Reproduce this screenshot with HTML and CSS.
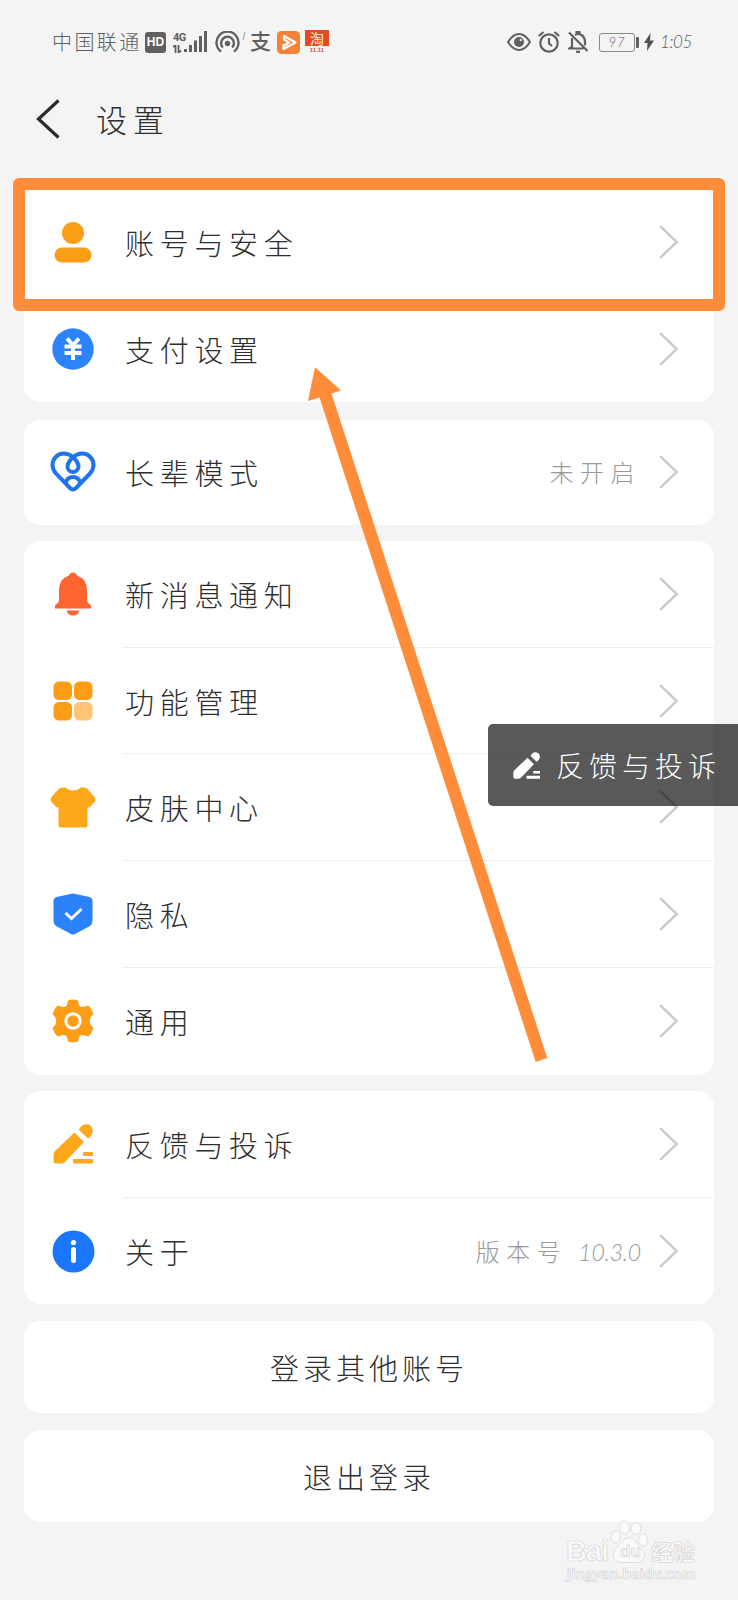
FILE: index.html
```html
<!DOCTYPE html>
<html lang="zh-CN">
<head>
<meta charset="utf-8">
<title>设置</title>
<link rel="stylesheet" href="styles.css">
</head>
<body>
<svg class="defs" width="0" height="0">
  <symbol id="chevron" viewBox="0 0 20 34"><path d="M1.2 1.2 17.6 17 1.2 32.8" fill="none" stroke="#c9c9c9" stroke-width="2.4"/></symbol>
  <symbol id="pencil" viewBox="0 0 40 40">
    <path d="M21.5 8.500 31 18 12.500 37.500Q11 39.500 8.500 39.500H3Q.5 39.500 .5 37V31Q.5 28.500 2 27Z"/>
    <path d="M26 6C28 1 31 .3 33.500 .3Q39.500 .8 39.700 6.500C39.700 10 38 12.500 35 14.500Z"/>
    <rect x="30" y="28" width="10" height="4" rx=".7"/><rect x="20" y="35" width="20" height="4.500" rx=".7"/>
  </symbol>
</svg>

<div class="screen">
  <header class="status">
    <span class="carrier">中国联通</span>
    <span class="hd">HD</span>
    <span class="net"><b>4G</b>
      <svg width="10" height="8" viewBox="0 0 10 8"><path d="M0 2 2.500 0V8M5.500 0V8L8 5.500" fill="none" stroke="#606060" stroke-width="1.8"/></svg>
    </span>
    <svg class="bars" width="24" height="22" viewBox="0 0 24 22" fill="#606060"><rect x="0" y="18" width="3" height="3"/><rect x="5" y="14" width="3" height="7"/><rect x="10" y="9.500" width="3" height="11.500"/><rect x="15" y="5" width="3" height="16"/><rect x="20" y="0" width="3" height="21"/></svg>
    <svg class="hotspot" width="25" height="22" viewBox="0 0 25 22" fill="none" stroke="#606060" stroke-width="2.400"><path d="M6 20.500A11 11 0 1 1 19 20.500M7.800 16.500A6.400 6.400 0 1 1 17.200 16.500"/><circle cx="12.500" cy="12.500" r="2.700" fill="#606060" stroke="none"/></svg>
    <svg class="tick" width="4" height="9" viewBox="0 0 4 9"><path d="M3 0 1 8" stroke="#888" stroke-width=".8"/></svg>
    <span class="alipay">支</span>
    <svg class="play" width="23" height="23" viewBox="0 0 23 23"><rect width="23" height="23" rx="4.500" fill="#f58238"/><path d="M6.500 13V18L18.500 11.500 7 5V8.500L12 11.500 6.500 15" fill="none" stroke="#fff" stroke-width="2.200" stroke-linejoin="round"/></svg>
    <span class="taobao"><b>淘</b><i>11.11</i></span>
    <span class="spacer"></span>
    <svg class="eye" width="24" height="18" viewBox="0 0 24 18"><path d="M1 9Q6 1 12 1T23 9Q18 17 12 17T1 9Z" fill="none" stroke="#606060" stroke-width="2"/><circle cx="12" cy="9" r="5" fill="#606060"/><circle cx="13.800" cy="7" r="1.200" fill="#ddd"/></svg>
    <svg class="alarm" width="22" height="22" viewBox="0 0 22 22" fill="none" stroke="#606060" stroke-width="2.200"><circle cx="11" cy="12" r="8.700"/><path d="M.8 5 5.500 1M16.500 1 21.200 5M11 7V12.500L14 15"/></svg>
    <svg class="mute" width="21" height="22" viewBox="0 0 21 22" fill="none" stroke="#606060" stroke-width="2.200"><path d="M1 1.500 19.500 20M4 7V16L1.500 17.500H15.500M7 4Q10 2 13.500 4Q17 6.500 17 11V14.500M8.500 3V1H11.500V3"/><path d="M8 20.800H12"/></svg>
    <span class="battery">97</span><span class="cap"></span>
    <svg class="bolt" width="10" height="18" viewBox="0 0 10 18"><path d="M6.500 0 0 10H3.500L3 18 10 7.500H6Z" fill="#505050"/></svg>
    <span class="time">1:05</span>
  </header>

  <nav class="title">
    <svg width="24" height="40" viewBox="0 0 24 40"><path d="M22.500 1.500 2.500 20 22.500 38.500" fill="none" stroke="#2b2b2b" stroke-width="3.200"/></svg>
    <h1>设置</h1>
  </nav>

  <main class="groups">
    <section class="card">
      <div class="row">
        <span class="icon"><svg width="44" height="44" viewBox="0 0 44 44" fill="#fb9e17"><circle cx="22" cy="13" r="11"/><rect x="3.500" y="27.500" width="37" height="15" rx="7.500"/></svg></span>
        <div class="body"><span class="label">账号与安全</span><svg class="chev"><use href="#chevron"/></svg></div>
      </div>
      <div class="row plain">
        <span class="icon"><svg width="44" height="44" viewBox="0 0 44 44"><circle cx="22" cy="22" r="20.700" fill="#2c83fc"/><path d="M16 11.500 22 18 28 11.500M13.500 19.500H30.500M13.500 26H30.500M22 18V33" fill="none" stroke="#fff" stroke-width="4"/></svg></span>
        <div class="body"><span class="label">支付设置</span><svg class="chev"><use href="#chevron"/></svg></div>
      </div>
    </section>

    <section class="card">
      <div class="row short">
        <span class="icon"><svg width="46" height="42" viewBox="0 0 46 42" fill="none" stroke="#1f74ea" stroke-width="4"><path d="M23 6C17 1.500 10 1.200 5.800 5.800C1 11 1.800 18 6 22.500L20 37Q23 40 26 37L40 22.500C44.200 18 45 11 40.200 5.800C36 1.200 29 1.500 23 6"/><path d="M23 6C19 10 17.500 12.500 17.500 15.500A5.500 5.500 0 0 0 28.500 15.500C28.500 12.500 27 10 23 6M15.500 32C18 24 28 24 30.500 32"/></svg></span>
        <div class="body"><span class="label">长辈模式</span><span class="value">未开启</span><svg class="chev"><use href="#chevron"/></svg></div>
      </div>
    </section>

    <section class="card">
      <div class="row">
        <span class="icon"><svg width="38" height="44" viewBox="0 0 38 44" fill="#fd6530"><path d="M15 3.500Q16 .5 19 .5T23 3.500Q33 7 33 18V27Q33 31 36 32.500Q37 33 37 34.500V36.500H1V34.500Q1 33 2 32.500Q5 31 5 27V18Q5 7 15 3.500Z"/><path d="M12.500 38.500H25.500Q24 43.500 19 43.500T12.500 38.500Z"/></svg></span>
        <div class="body"><span class="label">新消息通知</span><svg class="chev"><use href="#chevron"/></svg></div>
      </div>
      <div class="row">
        <span class="icon"><svg width="40" height="40" viewBox="0 0 40 40" fill="#fd9c15"><rect x=".5" y=".5" width="18.500" height="18.500" rx="5.500"/><rect x="21" y=".5" width="18.500" height="18.500" rx="5.500"/><rect x=".5" y="21" width="18.500" height="18.500" rx="5.500"/><rect x="21" y="21" width="18.500" height="18.500" rx="5.500" fill="#ffc478"/></svg></span>
        <div class="body"><span class="label">功能管理</span><svg class="chev"><use href="#chevron"/></svg></div>
      </div>
      <div class="row">
        <span class="icon"><svg width="46" height="41" viewBox="0 0 46 41"><path d="M12.500.5H15.500C19 4.500 27 4.500 30.500.5H33.500Q36 .5 37.500 2L44.500 10Q46.500 12.500 44.500 15L40.500 19.500Q39.500 20.500 37.500 20.500V38.500Q37.500 40.500 35.500 40.500H10.500Q8.500 40.500 8.500 38.500V20.500Q6.500 20.500 5.500 19.500L1.500 15Q-.5 12.500 1.500 10L8.500 2Q10 .5 12.500.5Z" fill="#fda81a"/></svg></span>
        <div class="body"><span class="label">皮肤中心</span><svg class="chev"><use href="#chevron"/></svg></div>
      </div>
      <div class="row">
        <span class="icon"><svg width="40" height="42" viewBox="0 0 40 42"><path d="M17.500 1Q20 0 22.500 1L36.500 4Q39.500 5 39.500 8V28Q39.500 31 37 33L22 41Q20 42 18 41L3 33Q.5 31 .5 28V8Q.5 5 3.500 4Z" fill="#2b82fb"/><path d="M12.500 20 18.500 25.500 28.500 16" fill="none" stroke="#fff" stroke-width="3"/></svg></span>
        <div class="body"><span class="label">隐私</span><svg class="chev"><use href="#chevron"/></svg></div>
      </div>
      <div class="row">
        <span class="icon"><svg width="42" height="44" viewBox="0 0 42 44"><path d="M16 1.500Q21-.5 26 1.500L27 6Q28.500 8.500 31 8L36.500 6.500Q40 10 41.500 15L38.500 18.500Q37 22 38.500 25.500L41.500 29Q40 34 36.500 37.500L31 36Q28.500 35.500 27 38L26 42.500Q21 44.500 16 42.500L15 38Q13.500 35.500 11 36L5.500 37.500Q2 34 .5 29L3.500 25.500Q5 22 3.500 18.500L.5 15Q2 10 5.500 6.500L11 8Q13.500 8.500 15 6Z" fill="#fd9c15"/><circle cx="21" cy="22" r="7.200" fill="none" stroke="#fff" stroke-width="3"/></svg></span>
        <div class="body"><span class="label">通用</span><svg class="chev"><use href="#chevron"/></svg></div>
      </div>
    </section>

    <section class="card">
      <div class="row">
        <span class="icon"><svg class="pen" width="40" height="40"><use href="#pencil"/></svg></span>
        <div class="body"><span class="label">反馈与投诉</span><svg class="chev"><use href="#chevron"/></svg></div>
      </div>
      <div class="row">
        <span class="icon"><svg width="43" height="43" viewBox="0 0 43 43"><circle cx="21.500" cy="21.500" r="21" fill="#1a77fb"/><circle cx="21.500" cy="12.500" r="2.600" fill="#fff"/><rect x="19" y="17" width="5" height="16" rx="2.500" fill="#fff"/></svg></span>
        <div class="body"><span class="label">关于</span><span class="value">版本号<em>10.3.0</em></span><svg class="chev"><use href="#chevron"/></svg></div>
      </div>
    </section>

    <button class="action">登录其他账号</button>
    <button class="action">退出登录</button>
  </main>

  <aside class="toast"><svg width="27" height="27"><use href="#pencil"/></svg><span>反馈与投诉</span></aside>
  <div class="highlight"></div>
  <svg class="arrow" width="242" height="696" viewBox="307 367 242 696"><path d="M315 367.300 341 390.500 331.500 393.500 547.300 1058 535.700 1062 319.500 397.500 308 401Z" fill="#ff8c38"/></svg>

  <div class="watermark">
    <svg width="38" height="44" viewBox="-1 0 38 44" fill="#fafafa" stroke="#dedede"><ellipse cx="4.500" cy="17" rx="4.500" ry="6"/><ellipse cx="13.500" cy="7.500" rx="5" ry="6.500"/><ellipse cx="25" cy="8.500" rx="5" ry="6"/><ellipse cx="32" cy="20" rx="4.500" ry="6"/><path d="M18.500 17.500C24 17.500 26 25 31 29.500C36 34 34 42.500 26 42.500H11C3 42.500 0 36 4 30C8 26 12 17.500 18.500 17.500Z"/></svg>
    <span class="bai">Bai</span><span class="du">du</span><span class="exp">经验</span>
    <span class="url">jingyan.baidu.com</span>
  </div>
</div>
</body>
</html>
```
FILE: styles.css
```css
* { box-sizing: border-box; }
body {
  margin: 0;
  background: #f4f4f4;
  color: #2e2e2e;
  font-family: "Noto Sans CJK SC", sans-serif;
  font-weight: 300;
}
svg { display: block; flex: none; }
.defs { position: absolute; }
.screen { position: relative; width: 738px; height: 1600px; overflow: hidden; }

.status {
  display: flex;
  align-items: center;
  height: 84px;
  padding: 0 46px 0 52px;
  color: #606060;
  line-height: 1;
}
.status > * { flex: none; }
.carrier { width: 93px; font-size: 20px; letter-spacing: 2.4px; white-space: nowrap; }
.hd {
  width: 21px; height: 21px; border-radius: 3px; background: #606060; color: #fff;
  font: bold 12px/21px "Liberation Sans", sans-serif; text-align: center;
}
.net { width: 14px; height: 21px; margin-left: 7px; }
.net b { display: block; font: bold 11px/11px Roboto, sans-serif; height: 13px; letter-spacing: -.5px; }
.status .bars { margin-left: -3px; }
.status .hotspot { margin-left: 7px; }
.status .tick { margin: -12px 0 0 2px; }
.alipay { width: 23px; margin: -3px 0 0 4px; font-size: 21px; font-weight: 500; }
.status .play { margin-left: 4px; }
.taobao { width: 24px; height: 24px; margin-left: 5px; text-align: center; }
.taobao b { display: block; height: 16px; background: #e34b25; color: #fff3d8; font-size: 14px; line-height: 16px; }
.taobao i { display: block; color: #d84c3c; font: bold 6px/8px "Liberation Sans", sans-serif; }
.spacer { flex: 1 1 0 !important; }
.status .alarm { margin-left: 7px; }
.status .mute { margin-left: 8px; }
.battery {
  width: 36px; height: 19px; margin-left: 10px; border: 1.500px solid #888; border-radius: 3px;
  font: italic 300 13px/16px Lato, sans-serif; letter-spacing: 1px; text-align: center;
}
.cap { width: 3px; height: 11px; margin-left: 1px; background: #606060; border-radius: 1px; }
.status .bolt { margin-left: 5px; }
.time { width: 32px; margin-left: 6px; font: italic 300 17px/20px Lato, sans-serif; letter-spacing: -.4px; white-space: nowrap; }

.title { display: flex; align-items: center; height: 70px; padding-left: 36px; }
.title h1 { margin: 0 0 0 36px; font-size: 31px; font-weight: 300; letter-spacing: 6px; line-height: 70px; }

.groups { display: flex; flex-direction: column; gap: 16.500px; margin: 34.500px 24px 0; }
.card { border-radius: 16px; background: #fff; }
.card:first-child { margin-bottom: 1.200px; }
.row { display: flex; height: 106.700px; }
.row.short { height: 105px; }
.icon { display: flex; align-items: center; justify-content: center; width: 99px; padding-right: 1px; }
.pen { fill: #fda81a; }
.body { display: flex; align-items: center; flex: 1; padding-right: 35px; border-bottom: 1px solid #eeefef; }
.row:last-child .body, .card:first-child .body { border-bottom: 0; }
.label { flex: 1; padding-left: 2px; font-size: 29px; letter-spacing: 5.700px; line-height: 40px; }
.value { color: #999; font-size: 24px; letter-spacing: 6.500px; line-height: 36px; margin-right: 18px; }
.value em { margin-left: 11px; font-family: Lato, sans-serif; letter-spacing: -.2px; font-size: 23px; font-weight: 300; }
.chev { width: 20px; height: 34px; }
.action {
  height: 92.200px; border: 0; border-radius: 16px; background: #fff; color: #2e2e2e;
  font: 300 29px/40px "Noto Sans CJK SC", sans-serif; letter-spacing: 4px;
}

.toast {
  position: absolute; left: 488px; top: 724px; display: flex; align-items: center;
  width: 250px; height: 82px; padding-left: 25px; gap: 16px;
  border-radius: 5px 0 0 5px; background: rgba(0, 0, 0, .65); color: #fff;
  fill: #fff; font-size: 28px; letter-spacing: 5px; white-space: nowrap;
}
.highlight {
  position: absolute; left: 13px; top: 178px; width: 712px; height: 133px;
  border: 12.300px solid #ff8c38; border-radius: 6px;
}
.arrow { position: absolute; left: 307px; top: 367px; }

.watermark { position: absolute; left: 566px; top: 1520px; width: 132px; height: 64px; color: #fafafa; line-height: 1; }
.watermark > * { position: absolute; -webkit-text-stroke: .7px #d4d4d4; }
.watermark svg { left: 44px; top: 0; }
.bai { left: 0; top: 18px; font: bold 29px/26px "Liberation Sans", sans-serif; letter-spacing: -1px; }
.du { left: 54px; top: 23px; font: bold 17px/18px "Liberation Sans", sans-serif; }
.exp { left: 85px; top: 19px; font-size: 22px; font-weight: 700; white-space: nowrap; }
.url { left: 1px; top: 46px; font: bold 14px/16px "Open Sans", sans-serif; white-space: nowrap; }
```
